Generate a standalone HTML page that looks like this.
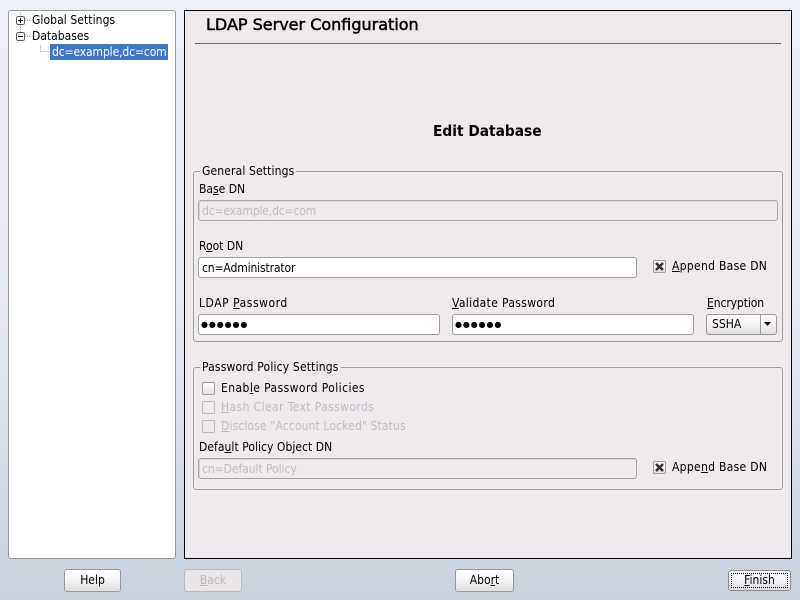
<!DOCTYPE html>
<html><head><meta charset="utf-8"><style>
html,body{margin:0;padding:0}
body{width:800px;height:600px;position:relative;overflow:hidden;background:linear-gradient(180deg,#eef0f8 0%,#e6e9f2 50%,#c9d1dd 100%);font-family:"DejaVu Sans",sans-serif;font-size:12px;font-stretch:condensed;color:#000}
.a{position:absolute;white-space:nowrap;line-height:14px}
.b{position:absolute;box-sizing:border-box}
.in{position:absolute;box-sizing:border-box;height:21px;border:1px solid #a09ca0;border-radius:3px;background:#fff;padding-left:3px;line-height:21px;white-space:nowrap;overflow:hidden}
.dis{background:#eee9ed;color:#c0bcc0;border-color:#a8a4a8;box-shadow:inset 1px 1px 0 #d8d4d8}
.pw{font-size:8px;font-stretch:normal;letter-spacing:.9px;line-height:20px;padding-left:2px}
.gb{position:absolute;box-sizing:border-box;border:1px solid #a09ca0;border-radius:3px}
.lg{position:absolute;background:#eee9ed;padding:0 2px 0 2px;line-height:14px;white-space:nowrap}
.cb{position:absolute;box-sizing:border-box;width:13px;height:13px;border:1px solid #a09ca0;border-radius:2px;background:linear-gradient(#fff,#e4e0e4)}
.cb.d{background:#eee9ed;border-color:#bdb9bd}
.btn{position:absolute;box-sizing:border-box;height:23px;border:1px solid #9c989c;border-radius:3px;background:linear-gradient(#fff 0%,#f5f3f5 50%,#e0dde0 100%);text-align:center;line-height:21px}
u{text-decoration:underline}
</style></head><body>

<div class="b" style="left:8px;top:10px;width:168px;height:549px;background:#fff;border:1px solid #9c989c;border-radius:3px"></div>
<svg class="b" style="left:8px;top:10px" width="60" height="50" shape-rendering="crispEdges">
<path d="M12.500 0v6M12.500 15v7M17 10.500h5M17 26.500h5M32.500 35v7M32.500 41.500h10" stroke="#aaa" stroke-dasharray="1 1" fill="none"/>
<rect x="8.500" y="6.500" width="8" height="8" rx="2" fill="#fff" stroke="#555"/>
<path d="M10 10.500h5M12.500 8v5" stroke="#000"/>
<rect x="8.500" y="22.500" width="8" height="8" rx="2" fill="#fff" stroke="#555"/>
<path d="M10 26.500h5" stroke="#000"/>
</svg>
<div class="a" style="left:32px;top:13px;letter-spacing:.07px">Global Settings</div>
<div class="a" style="left:32px;top:29px">Databases</div>
<div class="b" style="left:50px;top:44px;width:118px;height:16px;background:#3d77cb"></div>
<div class="a" style="left:52px;top:45px;color:#fff;letter-spacing:-.12px">dc=example,dc=com</div>

<div class="b" style="left:184px;top:10px;width:608px;height:549px;background:#eee9ed;border:1px solid #000"></div>
<div class="a" style="left:206px;top:16px;font-size:16px;font-stretch:normal;line-height:18px;-webkit-text-stroke:.5px #000">LDAP Server Configuration</div>
<div class="b" style="left:195px;top:43px;width:586px;height:1px;background:#6c686c"></div>
<div class="a" style="left:433px;top:122px;font-size:15.300px;line-height:18px;font-weight:bold">Edit Database</div>

<div class="gb" style="left:193px;top:171px;width:590px;height:171px"></div>
<div class="lg" style="left:200px;top:164px;letter-spacing:.13px">General Settings</div>
<div class="a" style="left:199px;top:182px">Ba<u>s</u>e DN</div>
<div class="in dis" style="left:198px;top:200px;width:580px;letter-spacing:-.15px">dc=example,dc=com</div>
<div class="a" style="left:199px;top:239px">R<u>o</u>ot DN</div>
<div class="in" style="left:198px;top:257px;width:439px;letter-spacing:-.13px">cn=Administrator</div>
<div class="cb" style="left:653px;top:260px"></div>
<svg class="b" style="left:653px;top:260px" width="13" height="13"><path d="M3 3l7 7M10 3l-7 7" stroke="#333" stroke-width="2.600"/></svg>
<div class="a" style="left:672px;top:259px;letter-spacing:.3px"><u>A</u>ppend Base DN</div>
<div class="a" style="left:199px;top:296px;letter-spacing:.54px">LDAP <u>P</u>assword</div>
<div class="in pw" style="left:198px;top:314px;width:242px">●●●●●●</div>
<div class="a" style="left:452px;top:296px;letter-spacing:.35px"><u>V</u>alidate Password</div>
<div class="in pw" style="left:452px;top:314px;width:242px">●●●●●●</div>
<div class="a" style="left:707px;top:296px;letter-spacing:-.1px"><u>E</u>ncryption</div>
<div class="btn" style="left:706px;top:314px;width:71px;height:21px;text-align:left;padding-left:5px;line-height:19px">SSHA</div>
<div class="b" style="left:760px;top:315px;width:1px;height:19px;background:#a09ca0"></div>
<svg class="b" style="left:761px;top:315px" width="15" height="19"><path d="M3 7h7l-3.500 4z" fill="#000"/></svg>

<div class="gb" style="left:193px;top:367px;width:590px;height:123px"></div>
<div class="lg" style="left:200px;top:360px;letter-spacing:.17px">Password Policy Settings</div>
<div class="cb" style="left:202px;top:382px"></div>
<div class="a" style="left:221px;top:381px;letter-spacing:.42px">Enab<u>l</u>e Password Policies</div>
<div class="cb d" style="left:202px;top:401px"></div>
<div class="a" style="left:221px;top:400px;color:#c0bcc0;letter-spacing:.4px"><u>H</u>ash Clear Text Passwords</div>
<div class="cb d" style="left:202px;top:420px"></div>
<div class="a" style="left:221px;top:419px;color:#c0bcc0;letter-spacing:.13px"><u>D</u>isclose "Account Locked" Status</div>
<div class="a" style="left:199px;top:440px;letter-spacing:.04px">Defa<u>u</u>lt Policy Object DN</div>
<div class="in dis" style="left:198px;top:458px;width:439px;letter-spacing:-.06px">cn=Default Policy</div>
<div class="cb" style="left:653px;top:461px"></div>
<svg class="b" style="left:653px;top:461px" width="13" height="13"><path d="M3 3l7 7M10 3l-7 7" stroke="#333" stroke-width="2.600"/></svg>
<div class="a" style="left:672px;top:460px;letter-spacing:.3px">Appe<u>n</u>d Base DN</div>

<div class="btn" style="left:64px;top:569px;width:57px">Help</div>
<div class="btn" style="left:184px;top:569px;width:58px;background:#e8e4e8;border-color:#bdb9bd;color:#bdb9bd"><u>B</u>ack</div>
<div class="btn" style="left:455px;top:569px;width:59px">Abo<u>r</u>t</div>
<div class="btn" style="left:728px;top:570px;width:63px;height:21px;line-height:19px;border-color:#8c888c"><span style="position:absolute;left:2px;top:2px;right:2px;bottom:2px;border:1px dotted #000"></span><span style="position:relative;top:0"><u>F</u>inish</span></div>

</body></html>
